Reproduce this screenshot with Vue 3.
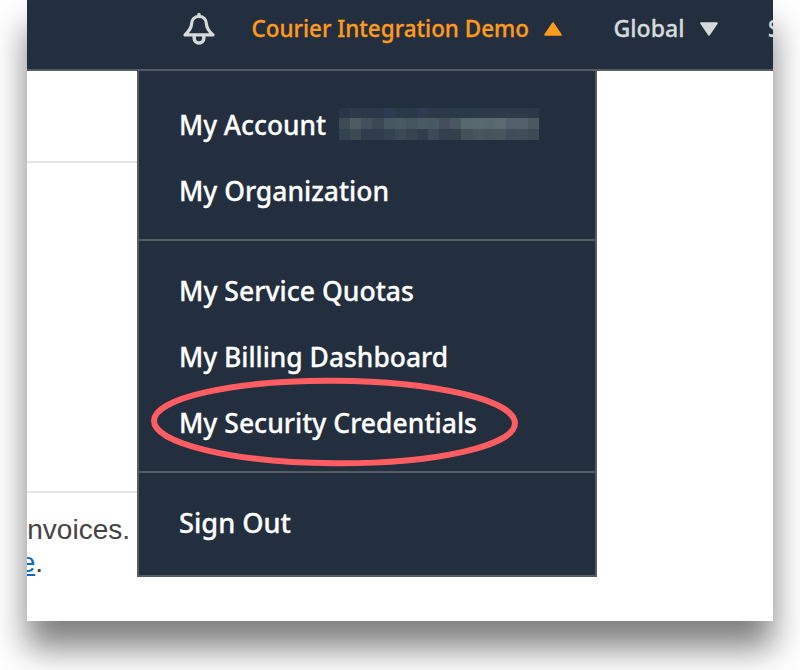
<script setup>
const groups = [
  [
    { text: 'My Account', width: 147, account: true },
    { text: 'My Organization', width: 210 },
  ],
  [
    { text: 'My Service Quotas', width: 235 },
    { text: 'My Billing Dashboard', width: 269 },
    { text: 'My Security Credentials', width: 298 },
  ],
  [{ text: 'Sign Out', width: 112 }],
]

const mosaic = [
  '#283647', '#2c3a49', '#2b3948', '#2a3848', '#2d3b50', '#2b3a49', '#2a3849', '#2e3b50', '#2b3949', '#2b3948', '#2b3a48', '#2b3a47', '#2d3b48', '#2d3b48', '#2d3b48', '#2d3b48', '#2d3a48', '#2b3847',
  '#3e4b57', '#4d5b62', '#434f5b', '#3c4854', '#475761', '#4a5962', '#45555d', '#495a62', '#4a5961', '#454e5b', '#495762', '#58686f', '#586a70', '#58686f', '#5b6a70', '#53606c', '#53606c', '#4a5961',
  '#33424f', '#3c4a54', '#303d4e', '#303d4d', '#33434f', '#3b4a54', '#36444f', '#303d4a', '#3c4a55', '#32404e', '#32414d', '#435159', '#47565d', '#46535a', '#47555c', '#404c59', '#414d59', '#3d4a55',
]
</script>

<template>
  <main class="stage">
    <section class="window">
      <header class="topbar">
        <svg class="bell" width="34" height="34" viewBox="0 0 34 34" fill="none">
          <path d="M13.200 23v3.200a4.800 4.800 0 0 0 9.600 0V23" stroke="#d5dbdb" stroke-width="3.500" />
          <path d="M18 4.300c-4.700 0-7.200 3.300-7.400 7.400-.2 4.600-2.300 7.400-6.600 11.200h28c-4.300-3.800-6.400-6.600-6.600-11.200C25.200 7.600 22.700 4.300 18 4.300Z" stroke="#d5dbdb" stroke-width="3.200" stroke-linejoin="round" />
          <path d="M18 2.500v2" stroke="#d5dbdb" stroke-width="3.400" stroke-linecap="round" />
        </svg>
        <svg class="label account-name" width="278" height="40">
          <text x="-.5" y="29" textLength="277.500" lengthAdjust="spacingAndGlyphs">Courier Integration Demo</text>
        </svg>
        <svg class="up" width="18" height="14" viewBox="0 0 18 14">
          <path d="M9 1.200 16.800 12.800H1.200Z" fill="#ff9b1c" stroke="#ff9b1c" stroke-width="2" stroke-linejoin="round" />
        </svg>
        <svg class="label region" width="72" height="40">
          <text x="-.5" y="29" textLength="71" lengthAdjust="spacingAndGlyphs">Global</text>
        </svg>
        <svg class="down" width="18" height="14" viewBox="0 0 18 14">
          <path d="M1.200 1.200h15.600L9 12.800Z" fill="#d5dbdb" stroke="#d5dbdb" stroke-width="2" stroke-linejoin="round" />
        </svg>
        <svg class="label support" width="84" height="40">
          <text x="0" y="29" textLength="80" lengthAdjust="spacingAndGlyphs">Support</text>
        </svg>
      </header>

      <div class="body">
        <div class="page">
          <div class="band"></div>
          <div class="panel"></div>
          <p class="note">
            <span class="line"><span>invoices.</span></span>
            <span class="line second"><span><a>here</a>.</span></span>
          </p>
        </div>

        <nav class="menu">
          <ul v-for="(group, g) in groups" :key="g" class="group">
            <li v-for="item in group" :key="item.text" class="item">
              <svg class="label" :width="item.width + 3" height="46">
                <text x="-1" y="33" :textLength="item.width" lengthAdjust="spacingAndGlyphs">{{ item.text }}</text>
              </svg>
              <div v-if="item.account" class="mosaic">
                <i v-for="(color, i) in mosaic" :key="i" :style="{ background: color }"></i>
              </div>
            </li>
          </ul>
          <svg class="ring" width="370" height="92" viewBox="0 0 370 92">
            <ellipse cx="185.500" cy="46" rx="180.500" ry="41.300" transform="rotate(.4 185 46)" />
          </svg>
        </nav>
      </div>
    </section>
  </main>
</template>

<style>
body {
  background: #fff;
}
</style>

<style scoped>
.stage {
  box-sizing: border-box;
  width: 800px;
  height: 670px;
  padding: 0 27px;
  overflow: hidden;
  font-family: "Noto Sans", "Open Sans", sans-serif;
}
.window {
  width: 746px;
  height: 621px;
  background: #fff;
  box-shadow: 0 27px 32px rgba(0, 0, 0, 0.5);
}
.topbar {
  box-sizing: border-box;
  display: flex;
  height: 71px;
  padding-left: 154px;
  background: #232f3e;
  border-bottom: 2px solid #545b64;
  overflow: hidden;
}
.topbar svg {
  flex: none;
}
.label {
  display: block;
  overflow: visible;
  fill: #fff;
  stroke: #fff;
  stroke-width: 0.3px;
  font-size: 27.5px;
  font-weight: 500;
}
.bell {
  margin-top: 12px;
}
.topbar .label {
  margin-top: 8px;
  font-size: 24px;
  fill: #d5dbdb;
  stroke: #d5dbdb;
}
.topbar .account-name {
  margin-left: 37px;
  fill: #ff9b1c;
  stroke: #ff9b1c;
}
.up {
  margin: 22px 0 0 14px;
}
.region {
  margin-left: 52px;
}
.down {
  margin: 22px 0 0 14px;
}
.topbar .support {
  margin-left: 50px;
}
.body {
  display: flex;
  align-items: flex-start;
}
.page {
  width: 110px;
}
.band {
  height: 90px;
  border-bottom: 2px solid #e4e4e4;
}
.panel {
  height: 328px;
  border-bottom: 2px solid #e4e4e4;
}
.note {
  margin: 20px 0 0;
  color: #444;
  font: 28px/33px "Liberation Sans", sans-serif;
}
.line {
  display: flex;
  justify-content: flex-end;
  width: 103px;
  overflow: hidden;
}
.line.second {
  width: 16px;
}
.note a {
  color: #1166cc;
  text-decoration: underline;
  text-decoration-thickness: 2px;
  text-underline-offset: 2px;
}
.menu {
  position: relative;
  box-sizing: border-box;
  width: 460px;
  height: 506px;
  background: #232f3e;
  border: 2px solid #545b64;
  border-top: 0;
}
.group {
  box-sizing: border-box;
  display: grid;
  gap: 20px;
  margin: 0;
  padding: 31px 0 25px 41px;
  list-style: none;
}
.group + .group {
  padding-top: 27px;
  border-top: 2px solid #545b64;
}
.item {
  display: flex;
  height: 46px;
}
.group:first-child {
  height: 168px;
}
.group:nth-child(2) {
  height: 232px;
}
.mosaic {
  display: grid;
  grid-template-columns: 11px 11px 11px 12px repeat(6, 11px) 11px 12px repeat(6, 11px);
  grid-template-rows: 10px 11px 11px;
  margin: 6px 0 0 9px;
}
.ring {
  position: absolute;
  left: 10px;
  top: 305px;
  overflow: visible;
}
.ring ellipse {
  fill: none;
  stroke: #ff5d61;
  stroke-width: 6;
}
</style>
